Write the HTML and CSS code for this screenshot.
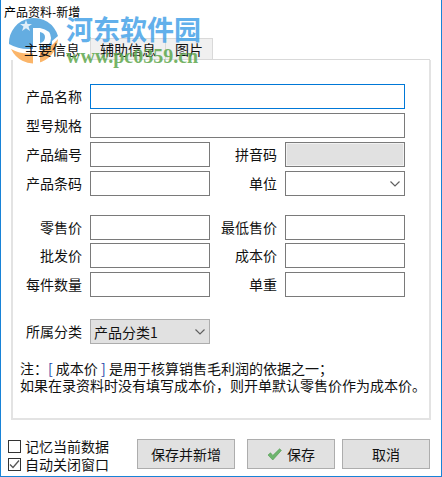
FILE: index.html
```html
<!DOCTYPE html>
<html lang="zh-CN">
<head>
    <meta charset="UTF-8">
    <title>产品资料-新增</title>
    <link rel="stylesheet" href="styles.css">
</head>
<body>
    <div class="window">
        <div class="title">产品资料-新增</div>

        <svg class="wm-logo" width="52" height="54" viewBox="0 0 52 54">
            <path d="M1 28 A25 25 0 0 1 50 20 L44 25 L44 30 L34 33 L20 33 Q10 33 1 28 Z" fill="#4a9fdc"/>
            <path d="M3 33 Q14 39 26 37 Q40 35 50 23 A25 27 0 0 1 3 33 Z" fill="#fba94f"/>
            <path d="M25 12 L32 12 L32 52 L25 52 Z M32 12 Q43 14 43 22 Q43 30 34 31 L32 27 Q37 26 37 21 Q37 17 32 16 Z" fill="#ffffff"/>
            <path d="M18 4 L19.5 8 L24 8 L20.5 10.5 L22 15 L18 12.3 L14 15 L15.5 10.5 L12 8 L16.5 8 Z" fill="#ffffff" opacity="0.8"/>
        </svg>

        <div class="tabs">
            <div class="tab active">主要信息</div>
            <div class="tab">辅助信息</div>
            <div class="tab">图片</div>
            <div class="tab-rest"></div>
        </div>

        <div class="panel">
            <div class="row">
                <label>产品名称</label>
                <input class="field wide focus" type="text">
            </div>
            <div class="row">
                <label>型号规格</label>
                <input class="field wide" type="text">
            </div>
            <div class="row">
                <label>产品编号</label>
                <input class="field" type="text">
                <label class="right">拼音码</label>
                <input class="field disabled" type="text">
            </div>
            <div class="row">
                <label>产品条码</label>
                <input class="field" type="text">
                <label class="right">单位</label>
                <div class="field combo">
                    <svg width="10" height="6" viewBox="0 0 10 6"><path d="M0.5 0.5 L5 5 L9.5 0.5" fill="none" stroke="#606060" stroke-width="1.2"/></svg>
                </div>
            </div>

            <div class="row group">
                <label>零售价</label>
                <input class="field" type="text">
                <label class="right">最低售价</label>
                <input class="field" type="text">
            </div>
            <div class="row">
                <label>批发价</label>
                <input class="field" type="text">
                <label class="right">成本价</label>
                <input class="field" type="text">
            </div>
            <div class="row">
                <label>每件数量</label>
                <input class="field" type="text">
                <label class="right">单重</label>
                <input class="field" type="text">
            </div>

            <div class="row category">
                <label>所属分类</label>
                <div class="field combo grey">
                    <span>产品分类1</span>
                    <svg width="10" height="6" viewBox="0 0 10 6"><path d="M0.5 0.5 L5 5 L9.5 0.5" fill="none" stroke="#606060" stroke-width="1.2"/></svg>
                </div>
            </div>

            <p class="note">注：<span class="hl">[</span> 成本价 <span class="hl">]</span> 是用于核算销售毛利润的依据之一；<br>如果在录资料时没有填写成本价，则开单默认零售价作为成本价。</p>
        </div>

        <div class="footer">
            <div class="checks">
                <div class="check"><span class="box"></span>记忆当前数据</div>
                <div class="check"><span class="box">
                    <svg width="11" height="11" viewBox="0 0 11 11"><path d="M1 5.5 L4 8.5 L10 1.5" fill="none" stroke="#555" stroke-width="1.3"/></svg>
                </span>自动关闭窗口</div>
            </div>
            <button class="btn btn-new">保存并新增</button>
            <button class="btn btn-save">
                <svg width="15" height="13" viewBox="0 0 15 13"><path d="M1 7 L3.5 4.8 L5.8 7.4 L12.6 0.8 L14.4 2.4 L5.8 12 Z" fill="#6db56d" stroke="#4f9a4f" stroke-width="0.6"/></svg>
                保存
            </button>
            <button class="btn btn-cancel">取消</button>
        </div>

        <div class="wm-name">河东软件园</div>
        <div class="wm-url">www.pc0359.cn</div>
    </div>
</body>
</html>
```

FILE: styles.css
```css
* {
    box-sizing: border-box;
}
html, body {
    margin: 0;
    padding: 0;
}
body {
    font-family: "Noto Sans CJK SC", "Liberation Sans", sans-serif;
    font-size: 14px;
    color: #111;
    background: #fff;
}
.window {
    position: relative;
    width: 442px;
    height: 477px;
    border: 1px solid #1883d7;
    border-top: none;
    background: #fff;
    overflow: hidden;
    padding: 0 11px 0 10px;
}
.title {
    height: 37px;
    margin-left: -7px;
    padding-top: 3px;
    font-size: 12px;
    line-height: 18px;
    color: #000;
}
.tabs {
    display: flex;
    height: 23px;
    position: relative;
    z-index: 1;
}
.tab {
    border: 1px solid #d9d9d9;
    background: #f0f0f0;
    line-height: 21px;
    padding: 0 9px;
    margin-top: 1px;
}
.tab.active {
    background: transparent;
    border: none;
    border-right: 1px solid #d9d9d9;
    width: 80px;
    padding: 2px 0 0 13px;
    margin-top: 0;
}
.tab + .tab {
    margin-left: -1px;
}
.tab-rest {
    flex: 1;
    border-bottom: 1px solid #d9d9d9;
}
.panel {
    width: 420px;
    height: 360px;
    border: 2px solid #e3e3e3;
    border-top: none;
    padding: 24px 0 0 8px;
}
.row {
    display: flex;
    height: 25px;
    margin-bottom: 4px;
    align-items: center;
}
.row label {
    width: 69px;
    padding: 0 8px 2px 0;
    text-align: right;
    flex: none;
    line-height: 20px;
    white-space: nowrap;
}
.row label.right {
    width: 75px;
}
.row.group {
    margin-top: 19px;
    margin-bottom: 3px;
}
.row.category {
    margin-top: 22px;
}
.field {
    display: block;
    width: 120px;
    height: 25px;
    flex: none;
    border: 1px solid #7a7a7a;
    background: #fff;
    padding: 0;
    margin: 0;
    outline: none;
}
.field.wide {
    width: 315px;
}
.field.focus {
    border-color: #0078d7;
}
.field.disabled {
    background: #e1e1e1;
    box-shadow: inset 0 0 0 1px #f2f2f2;
}
.combo {
    display: flex;
    align-items: center;
    justify-content: flex-end;
    padding-right: 4px;
}
.combo.grey {
    background: #e1e1e1;
    border-color: #adadad;
    justify-content: space-between;
    padding-left: 3px;
}
.note {
    margin: 16px 0 0 -1px;
    line-height: 17px;
    white-space: nowrap;
}
.hl {
    color: #1a3fa8;
}
.footer {
    display: flex;
    align-items: flex-start;
    margin-top: 19px;
    margin-left: -3px;
}
.checks {
    width: 129px;
    flex: none;
    margin-top: -2px;
}
.check {
    display: flex;
    align-items: center;
    height: 18px;
    gap: 4px;
}
.box {
    width: 13px;
    height: 13px;
    border: 1px solid #333;
    display: flex;
    align-items: center;
    justify-content: center;
    background: #fff;
}
.btn {
    height: 30px;
    font: inherit;
    color: #111;
    background: #e1e1e1;
    border: 1px solid #adadad;
    padding: 0;
    display: flex;
    align-items: center;
    justify-content: center;
    gap: 5px;
}
.btn-new {
    width: 98px;
}
.btn-save {
    width: 88px;
    margin-left: 12px;
}
.btn-cancel {
    width: 88px;
    margin-left: 7px;
}
/* watermark: logo sits under the tab text, the site name over everything */
.wm-logo {
    position: absolute;
    left: 7px;
    top: 16px;
    opacity: 0.85;
}
.wm-name {
    position: absolute;
    z-index: 2;
    left: 65px;
    top: 10px;
    font-family: "Noto Sans CJK SC", sans-serif;
    font-weight: 700;
    font-size: 27px;
    line-height: 38px;
    color: #47a3e8;
    opacity: 0.85;
    white-space: nowrap;
}
.wm-url {
    position: absolute;
    z-index: 2;
    left: 65px;
    top: 47px;
    font-family: "Liberation Serif", serif;
    font-weight: 700;
    font-size: 20px;
    line-height: 18px;
    color: #5fa84e;
    opacity: 0.85;
    white-space: nowrap;
}
```
